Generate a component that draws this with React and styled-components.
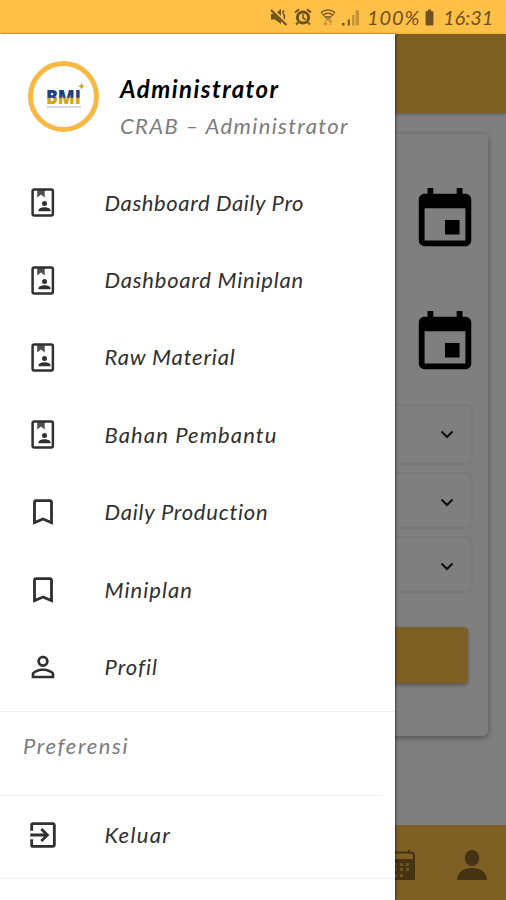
import React from 'react';
import styled, { createGlobalStyle, ThemeProvider } from 'styled-components';
import {
  MdBatteryFull,
  MdBookmarkBorder,
  MdEvent,
  MdExitToApp,
  MdPersonOutline,
} from 'react-icons/md';

const theme = {
  colors: {
    primary: '#ffc048',
    status: '#6f5220',
    text: '#303030',
    muted: '#7c7c7c',
    divider: '#f1f1f1',
  },
};

const GlobalStyle = createGlobalStyle`
  * {
    box-sizing: border-box;
  }

  body {
    margin: 0;
    font-family: 'Lato', 'Open Sans', sans-serif;
    font-style: italic;
  }

  svg {
    display: block;
    flex-shrink: 0;
  }
`;

const Screen = styled.div`
  position: relative;
  width: 506px;
  height: 900px;
  overflow: hidden;
  display: flex;
  flex-direction: column;
  background: #fff;
`;

const StatusBar = styled.div`
  height: 34px;
  padding: 0 14px 0 0;
  display: flex;
  align-items: center;
  justify-content: flex-end;
  background: ${({ theme }) => theme.colors.primary};
  color: ${({ theme }) => theme.colors.status};
  flex-shrink: 0;
`;

const StatusIcon = styled.span`
  margin-right: ${({ $gap }) => $gap}px;
`;

const StatusText = styled.span`
  width: ${({ $width }) => $width}px;
  font-size: 20px;
  line-height: 34px;
  white-space: nowrap;
  letter-spacing: ${({ $spacing }) => $spacing}px;
`;

const AppBar = styled.div`
  height: 79px;
  background: ${({ theme }) => theme.colors.primary};
  box-shadow: 0 1px 3px rgba(0, 0, 0, 0.3);
  flex-shrink: 0;
`;

const Content = styled.main`
  flex: 1;
  padding: 21px 18px 0;
`;

const Card = styled.section`
  height: 602px;
  padding: 51px 15px 0;
  border-radius: 5px;
  box-shadow: 0 2px 6px rgba(0, 0, 0, 0.38);
`;

const DateRow = styled.div`
  height: 122.5px;
  display: flex;
  justify-content: flex-end;
  margin-right: -7px;
`;

const Select = styled.div`
  height: ${({ $height }) => $height}px;
  margin-top: ${({ $top }) => $top}px;
  padding: ${({ $shift }) => $shift || 0}px 17px 0 0;
  display: flex;
  align-items: center;
  justify-content: flex-end;
  border: 2px solid #f2f2f2;
  border-radius: 7px;
  color: #222;
`;

const SubmitButton = styled.button`
  display: block;
  width: calc(100% - 5px);
  height: 56px;
  margin-top: 34px;
  border: 0;
  border-radius: 4px;
  background: ${({ theme }) => theme.colors.primary};
  box-shadow: 0 2px 4px rgba(0, 0, 0, 0.35);
`;

const BottomBar = styled.nav`
  height: 75px;
  padding: 4px 19px 0 0;
  display: flex;
  align-items: center;
  justify-content: flex-end;
  gap: 42px;
  color: #8a6826;
  background: ${({ theme }) => theme.colors.primary};
  flex-shrink: 0;
`;

const Scrim = styled.div`
  position: absolute;
  inset: 34px 0 0;
  background: rgba(0, 0, 0, 0.5);
`;

const Drawer = styled.aside`
  position: absolute;
  top: 34px;
  left: 0;
  bottom: 0;
  width: 394.5px;
  background: #fff;
  box-shadow: 1px 0 2px rgba(0, 0, 0, 0.5);
`;

const Profile = styled.header`
  height: 130px;
  padding: 27px 0 0 28px;
  display: flex;
  gap: 21px;
`;

const Avatar = styled.div`
  width: 71px;
  height: 71px;
  display: flex;
  align-items: center;
  justify-content: center;
  border: 5px solid #f7b844;
  border-radius: 50%;
`;

const ProfileText = styled.div`
  padding-top: 12px;
`;

const Name = styled.h1`
  margin: 0 0 7px;
  font-size: 24px;
  line-height: 32px;
  font-weight: 700;
  letter-spacing: ${({ $spacing }) => $spacing}px;
  color: #000;
`;

const Role = styled.p`
  margin: 0;
  font-size: 22px;
  line-height: 28px;
  letter-spacing: ${({ $spacing }) => $spacing}px;
  white-space: nowrap;
  color: ${({ theme }) => theme.colors.muted};
`;

const Menu = styled.ul`
  margin: 0;
  padding: 0 0 5px;
  list-style: none;
`;

const MenuItem = styled.li`
  height: 77.4px;
  padding-left: 25px;
  display: flex;
  align-items: center;
  color: ${({ theme }) => theme.colors.text};
`;

const LogoutItem = styled(MenuItem).attrs({ as: 'div' })`
  height: 82px;
  padding-bottom: 4px;
`;

const MenuIcon = styled.span`
  width: 35px;
  margin-right: 44.5px;
  display: flex;
  justify-content: center;
`;

const MenuLabel = styled.span`
  font-size: 22px;
  line-height: 30px;
  letter-spacing: ${({ $spacing }) => $spacing}px;
  white-space: nowrap;
`;

const Preferences = styled.div`
  width: ${({ $width }) => $width || '100%'};
  border-top: 1px solid ${({ theme }) => theme.colors.divider};
`;

const SectionTitle = styled.h2`
  height: 83px;
  margin: 0;
  padding: 19px 0 0 23px;
  font-size: 22px;
  line-height: 30px;
  font-weight: 400;
  letter-spacing: ${({ $spacing }) => $spacing}px;
  color: ${({ theme }) => theme.colors.muted};
`;

const MuteIcon = () => (
  <svg width="18" height="18" viewBox="0 0 18 18">
    <path d="M1 6h4l6-5v15l-6-4.500H1z" fill="currentColor" />
    <path d="M13 5q3 4 0 8M14 2.500l-1.500 2" fill="none" stroke="currentColor" strokeWidth="1.500" />
    <path d="m1.500 1 15.500 15.500" stroke="#ffc048" strokeWidth="3.500" />
    <path d="m1 2 15.500 15" stroke="currentColor" strokeWidth="2" />
  </svg>
);

const AlarmIcon = () => (
  <svg width="18" height="18" viewBox="0 0 18 18" fill="none" stroke="currentColor" strokeWidth="2">
    <path d="M1 4.500 5 1.200M17 4.500l-4-3.300M4 14.500l-2 2M14 14.500l2 2" />
    <circle cx="9" cy="9.500" r="5.600" strokeWidth="3" />
    <path d="M9 6v4l2.500 1.500" strokeWidth="1.500" />
  </svg>
);

const WifiIcon = () => (
  <svg width="16" height="18" viewBox="0 0 16 18" fill="none" stroke="currentColor" strokeWidth="1.300">
    <path d="M1 4.500Q8-.8 15 4.500M3 7.200Q8 3.200 13 7.200M5.300 9.600Q8 7.600 10.700 9.600" />
    <path d="M8 9.500v3M1.200 4.700 8 12l6.800-7.300" opacity=".6" />
    <path d="M5.500 12v4.500M4 15l1.500 2L7 15M10.500 17v-4.500M9 14l1.500-2 1.500 2" opacity=".4" />
  </svg>
);

const SignalIcon = () => (
  <svg width="17" height="17" viewBox="0 0 17 17" fill="currentColor">
    <path d="M0 14h2.500v2.500H0zM5.800 10.500h2v6h-2z" />
    <path d="M10 6h2.500v10.500H10zM13.600 1H17v15.500h-3.400z" opacity=".4" />
  </svg>
);

const ContactBookIcon = () => (
  <svg width="24" height="29" viewBox="0 0 24 29">
    <rect x="1.600" y="1.600" width="20.300" height="25.800" rx="1.600" fill="none" stroke="currentColor" strokeWidth="2.500" />
    <path d="M6.200 2h7.500v7.500L10 6.500 6.200 9.500z" fill="currentColor" opacity=".85" />
    <circle cx="13.500" cy="15.600" r="2.500" fill="currentColor" />
    <path d="M7.500 23.300v-1c0-2 3-3 6-3s6 1 6 3v1z" fill="currentColor" />
  </svg>
);

const ChevronIcon = () => (
  <svg width="14" height="9" viewBox="0 0 14 9" fill="none" stroke="currentColor" strokeWidth="2.200">
    <path d="m1.500 1.500 5.500 5.500 5.500-5.500" />
  </svg>
);

const CalendarIcon = () => (
  <svg width="29" height="30" viewBox="0 0 29 30">
    <path d="M1 9V6q0-3.500 3.500-3.500h20Q28 2.500 28 6v3M6 0v4M23 0v4" fill="none" stroke="currentColor" strokeWidth="2" />
    <path d="M0 9h29v21H0z" fill="currentColor" />
    <path
      d="M8 13h3v3H8zM14 13h3v3h-3zM20 13h3v3h-3zM2.500 18h3v3h-3zM8 18h3v3H8zM14 18h3v3h-3zM20 18h3v3h-3zM2.500 24h3v3h-3zM8 24h3v3H8zM14 24h3v3h-3z"
      fill="#dca544"
    />
  </svg>
);

const UserIcon = () => (
  <svg width="30" height="30" viewBox="0 0 30 30" fill="currentColor">
    <ellipse cx="15" cy="8" rx="7.300" ry="8" />
    <path d="M0 30C.5 22 6 18 15 18s14.500 4 15 12z" />
  </svg>
);

const Logo = () => (
  <svg width="42" height="28" viewBox="0 0 42 28">
    <defs>
      <linearGradient id="brand" x1="0" y1="0" x2="0" y2="1">
        <stop offset="0.540" stopColor="#213f80" />
        <stop offset="0.600" stopColor="#d3a51d" />
      </linearGradient>
    </defs>
    <text
      x="3"
      y="20.500"
      textLength="35"
      lengthAdjust="spacingAndGlyphs"
      fontFamily="Open Sans"
      fontStyle="normal"
      fontSize="20"
      fontWeight="800"
      fill="url(#brand)"
    >
      BMI
    </text>
    <path d="m38.500 0 1 2.300 2.300 1-2.300 1-1 2.300-1-2.300-2.300-1 2.300-1z" fill="#d09a24" />
    <path d="M4 24h34" stroke="#cdd2dc" strokeWidth="2" strokeDasharray="3 .5" />
  </svg>
);

const menuItems = [
  { label: 'Dashboard Daily Pro', icon: <ContactBookIcon />, spacing: 0.62 },
  { label: 'Dashboard Miniplan', icon: <ContactBookIcon />, spacing: 0.78 },
  { label: 'Raw Material', icon: <ContactBookIcon />, spacing: 0.85 },
  { label: 'Bahan Pembantu', icon: <ContactBookIcon />, spacing: 1.1 },
  { label: 'Daily Production', icon: <MdBookmarkBorder size={34} />, spacing: 0.75 },
  { label: 'Miniplan', icon: <MdBookmarkBorder size={34} />, spacing: 1.05 },
  { label: 'Profil', icon: <MdPersonOutline size={34} />, spacing: 1 },
];

const App = () => {
  return (
    <ThemeProvider theme={theme}>
      <GlobalStyle />
      <Screen>
        <StatusBar>
          <StatusIcon $gap={6}><MuteIcon /></StatusIcon>
          <StatusIcon $gap={8}><AlarmIcon /></StatusIcon>
          <StatusIcon $gap={6}><WifiIcon /></StatusIcon>
          <StatusIcon $gap={8}><SignalIcon /></StatusIcon>
          <StatusText $width={53} $spacing={0.9}>100%</StatusText>
          <StatusIcon $gap={4}><MdBatteryFull size={19} /></StatusIcon>
          <StatusText $width={49} $spacing={0}>16:31</StatusText>
        </StatusBar>
        <AppBar />
        <Content>
          <Card>
            <DateRow><MdEvent size={70} /></DateRow>
            <DateRow><MdEvent size={70} /></DateRow>
            <Select $height={61} $top={-26}><ChevronIcon /></Select>
            <Select $height={57} $top={7} $shift={4}><ChevronIcon /></Select>
            <Select $height={57} $top={7} $shift={3}><ChevronIcon /></Select>
            <SubmitButton />
          </Card>
        </Content>
        <BottomBar>
          <CalendarIcon />
          <UserIcon />
        </BottomBar>
        <Scrim />
        <Drawer>
          <Profile>
            <Avatar><Logo /></Avatar>
            <ProfileText>
              <Name $spacing={1.45}>Administrator</Name>
              <Role $spacing={1.35}>CRAB – Administrator</Role>
            </ProfileText>
          </Profile>
          <Menu>
            {menuItems.map(({ label, icon, spacing }) => (
              <MenuItem key={label}>
                <MenuIcon>{icon}</MenuIcon>
                <MenuLabel $spacing={spacing}>{label}</MenuLabel>
              </MenuItem>
            ))}
          </Menu>
          <Preferences>
            <SectionTitle $spacing={1.6}>Preferensi</SectionTitle>
          </Preferences>
          <Preferences $width="382px">
            <LogoutItem>
              <MenuIcon><MdExitToApp size={34} /></MenuIcon>
              <MenuLabel $spacing={1.35}>Keluar</MenuLabel>
            </LogoutItem>
          </Preferences>
          <Preferences />
        </Drawer>
      </Screen>
    </ThemeProvider>
  );
};

export default App;
